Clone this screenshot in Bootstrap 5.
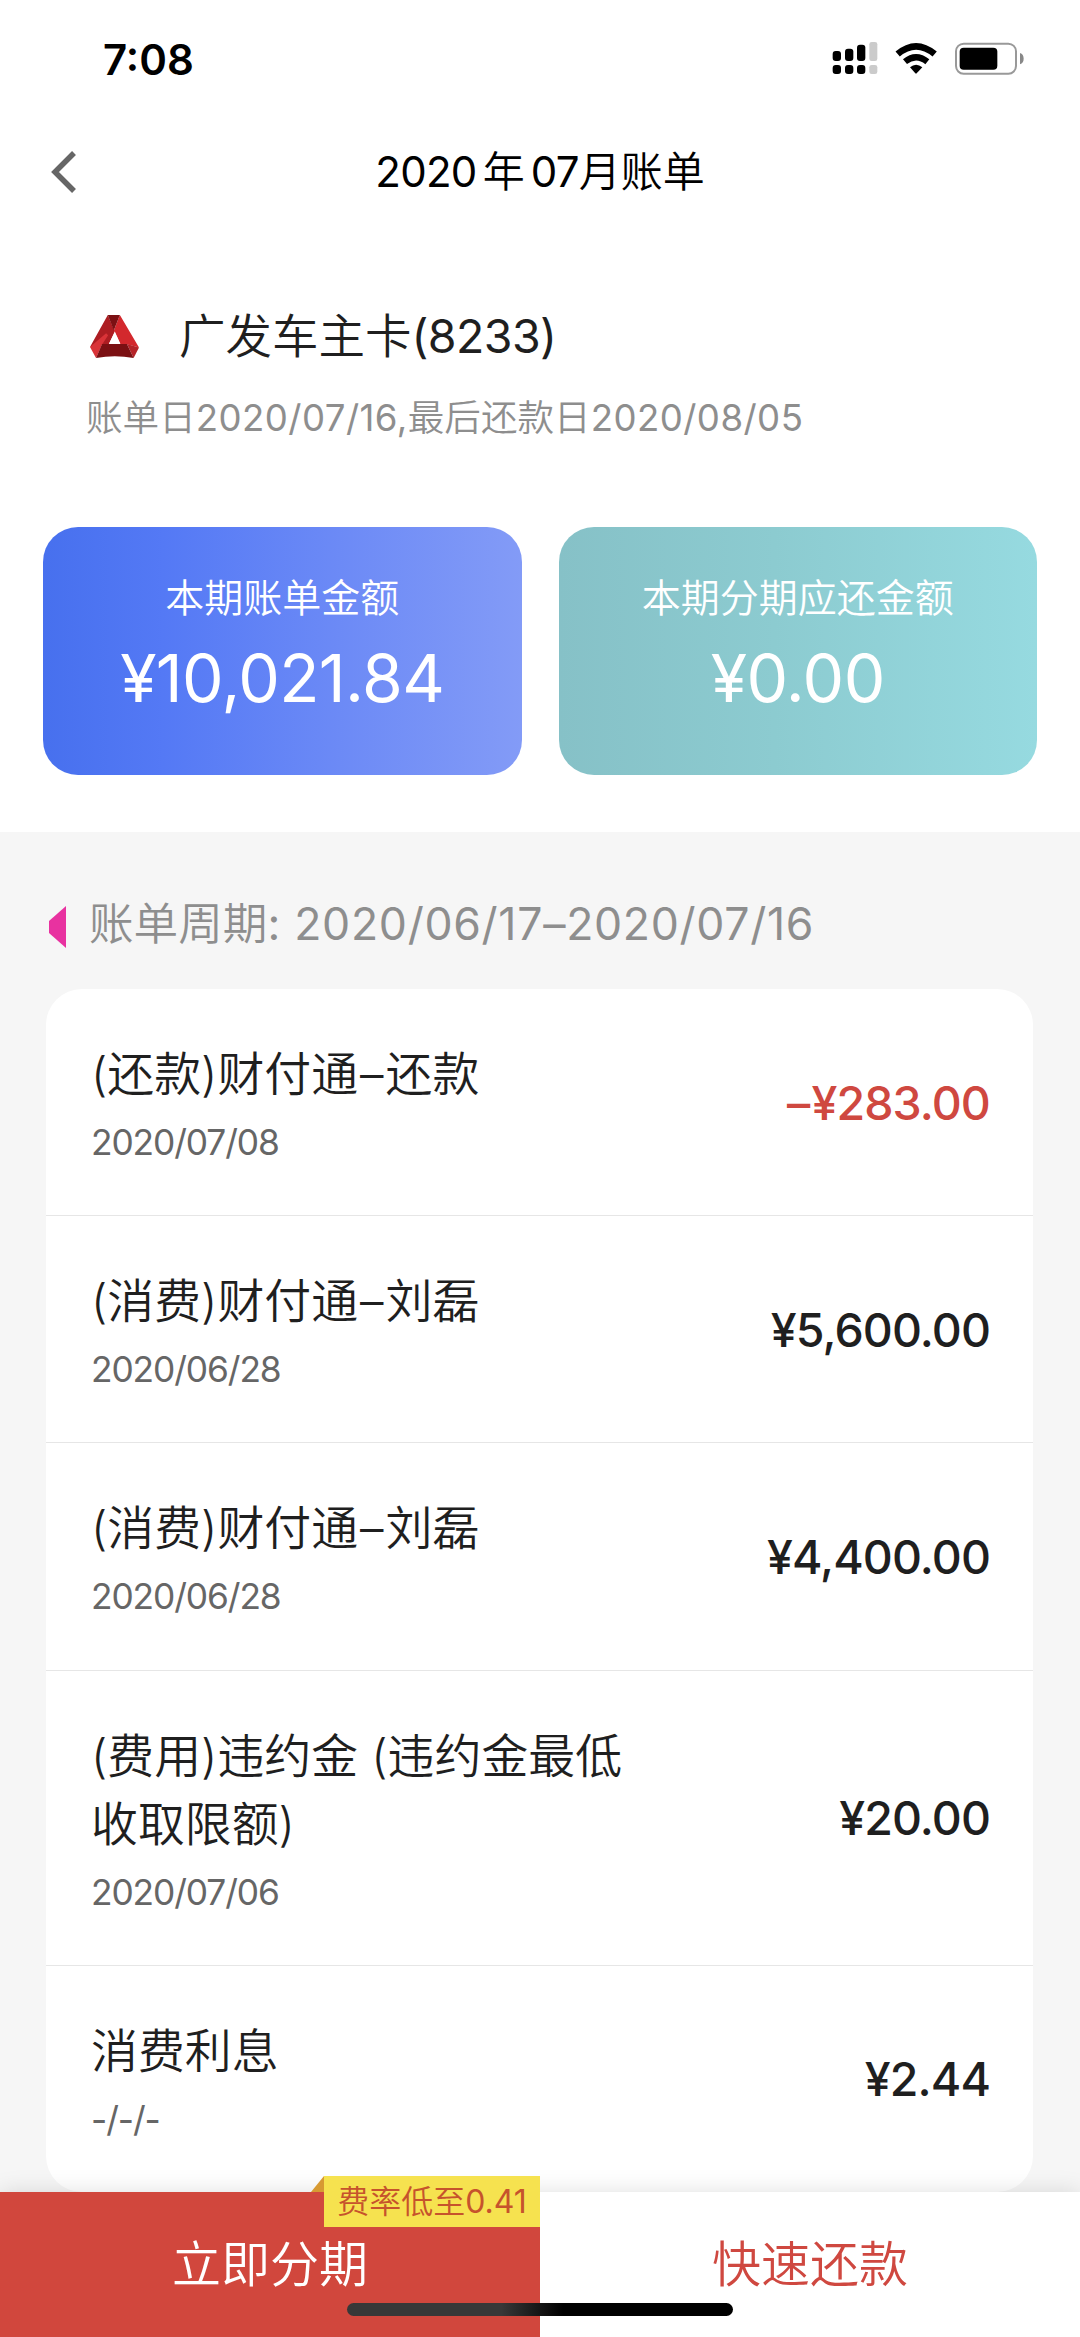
<!DOCTYPE html>
<html lang="zh-CN">
<head>
<meta charset="utf-8">
<meta name="viewport" content="width=device-width, initial-scale=1">
<title>2020年07月账单</title>
<link href="https://cdn.jsdelivr.net/npm/bootstrap@5.3.0/dist/css/bootstrap.min.css" rel="stylesheet">
<style>
  body { font-family: Inter, "Noto Sans CJK SC", sans-serif; font-weight: 350; color: #1f1f1f; background: #fff; width: 1080px; }
  .screen { height: 2337px; overflow: hidden; }
  .status-bar { height: 119px; padding-left: 103px; }
  .clock { font-size: 42px; font-weight: 600; line-height: 60px; color: #000; }
  .status-icons { margin-right: 40px; }
  .title-bar { height: 106px; }
  .back-link { left: 50px; top: 32px; line-height: 0; }
  .page-title { font-size: 42px; line-height: 60px; color: #000; font-weight: 350; }
  .page-title .gap-char { margin: 0 6px; }
  .page-title .digits { letter-spacing: -.7px; }
  .digits { font-weight: 400; }
  .account { height: 607px; padding: 77px 43px 0; background: #fff; }
  .account-name { padding-left: 47px; gap: 40px; font-size: 46.5px; line-height: 68px; }
  .account-name .digits { letter-spacing: -.6px; }
  .account-dates { padding-left: 43px; margin-top: 18px; font-size: 36.6px; line-height: 60px; color: #8e8e8e; }
  .account-dates .digits { letter-spacing: .45px; }
  .stat-row { gap: 37px; margin-top: 79px; }
  .stat { height: 248px; border-radius: 35px; color: #fff; padding-top: 41px; }
  .stat-blue { background: linear-gradient(90deg, #4770ee, #5479f5 25%, #6c8af6 62%, #839bf7); }
  .stat-teal { background: linear-gradient(90deg, #86c1c7, #8ccbd0 45%, #96dae0); }
  .stat-label { font-size: 39px; line-height: 60px; }
  .stat-value { font-size: 66px; line-height: 80px; margin-top: 10px; letter-spacing: -.6px; font-weight: 400; }
  .bill { background: #f6f6f6; padding: 62px 47px 0 46px; }
  .period { font-size: 44.6px; line-height: 60px; color: #8e8e8e; }
  .period svg { margin: 6px 23px 0 3px; }
  .period .digits { letter-spacing: .7px; }
  .entries { margin-top: 35px; border-radius: 36px; background: #fff; --bs-list-group-bg: #fff; }
  .entry { padding: 51px 43px 45.2px 45px; border: 0; border-bottom: 1px solid #e6e6e6; background: transparent; color: #1f1f1f; }
  .entry:last-child { border-color: transparent; }
  .entry-name { font-size: 46.9px; line-height: 68px; width: 550px; }
  .dash { padding: 0 2px; }
  .entry-date { font-size: 35.3px; line-height: 54px; margin-top: 8px; color: #666; letter-spacing: -1.1px; font-weight: 400; }
  .entry-sum { font-size: 46.5px; line-height: 60px; font-weight: 500; letter-spacing: -.9px; margin-bottom: 5px; }
  .refund { color: #cf4840; }
  .action-bar { height: 145px; box-shadow: 0 0 22px rgba(0,0,0,.13); background: #fff; }
  .action { font-size: 49px; line-height: 60px; padding-top: 43px; text-decoration: none; }
  .action-red { background: #d1473d; color: #fff; }
  .action-plain { color: #cf4840; background: #fff; }
  .rate-tag { right: 0; top: -16px; width: 216px; height: 51px; line-height: 51px; font-size: 32px; background: #f6e24f; color: #c6532c; }
  .rate-tag svg { left: -13px; top: 0; }
  .home-line { left: 347px; bottom: 21px; width: 386px; height: 13px; border-radius: 7px; background: linear-gradient(90deg, #383838 40%, #000 56%); }
</style>
</head>
<body>
<main class="screen d-flex flex-column">
  <header>
    <div class="status-bar d-flex align-items-center justify-content-between">
      <span class="clock">7:08</span>
      <svg class="status-icons" width="220" height="60" viewBox="0 0 660 180" aria-hidden="true">
        <g><rect x="38" y="63" width="25" height="30" rx="9"/><rect x="75" y="56" width="25" height="37" rx="9"/><rect x="111" y="44" width="25" height="49" rx="9"/>
        <rect x="38" y="105" width="25" height="27" rx="9"/><rect x="75" y="105" width="25" height="27" rx="9"/><rect x="111" y="105" width="25" height="27" rx="9"/></g>
        <g fill="#cbcbcb"><rect x="148" y="36" width="24" height="57" rx="7"/><rect x="148" y="105" width="24" height="27" rx="7"/></g>
        <g fill="none" stroke="#000" stroke-width="20"><path d="M233 72Q288 26 344 72"/><path d="M255 95Q288 68 322 95" stroke-width="19"/></g>
        <path d="M270 112Q288 96 307 112L290 130Q288 132 286 130Z"/>
        <rect x="408" y="41" width="180" height="90" rx="23" fill="none" stroke="#999" stroke-width="6"/>
        <rect x="419" y="53" width="113" height="66" rx="12"/>
        <path d="M600 69Q611 73 611 86T600 103Z" fill="#888"/>
      </svg>
    </div>
    <nav class="title-bar position-relative d-flex align-items-center justify-content-center">
      <a class="back-link position-absolute" href="#" aria-label="返回"><svg width="28" height="42" viewBox="0 0 28 42"><path d="M24 2L5 21L24 40" fill="none" stroke="#666" stroke-width="5.5"/></svg></a>
      <h1 class="page-title d-flex m-0"><span class="digits">2020</span><span class="gap-char">年</span><span class="digits">07</span><span>月账单</span></h1>
    </nav>
  </header>

  <section class="account flex-shrink-0">
    <div class="account-name d-flex align-items-center">
      <svg width="49" height="43" viewBox="32 30 146 128" aria-hidden="true">
        <path d="M85 30L106 80L88 117H68L32 125Z" fill="#ad1d22"/>
        <path d="M121 30L178 127L142 117H123L103 76Z" fill="#d3282d"/>
        <path d="M32 125L80 84L86 90L68 118L50 158Z" fill="#d93338"/>
        <path d="M142 116L178 127L162 158Z" fill="#b52328"/>
        <path d="M68 116H142L162 158Q106 148 50 158Z" fill="#7b1013"/>
        <path d="M85 30H121L103 76Z" fill="#7b1013"/>
        <path d="M106 79L122 115H89Z" fill="#fff"/>
      </svg>
      <span>广发车主卡<span class="digits">(8233)</span></span>
    </div>
    <div class="account-dates">账单日<span class="digits">2020/07/16,</span>最后还款日<span class="digits">2020/08/05</span></div>
    <div class="stat-row d-flex text-center">
      <div class="stat stat-blue flex-fill w-50"><div class="stat-label">本期账单金额</div><div class="stat-value">¥10,021.84</div></div>
      <div class="stat stat-teal flex-fill w-50"><div class="stat-label">本期分期应还金额</div><div class="stat-value">¥0.00</div></div>
    </div>
  </section>

  <section class="bill flex-grow-1">
    <div class="period d-flex align-items-center">
      <svg width="17" height="42" viewBox="0 0 17 42" aria-hidden="true"><path d="M17 0V42L0 27V15Z" fill="#e832a0"/></svg>
      <span>账单周期<span class="digits">: 2020/06/17–2020/07/16</span></span>
    </div>
    <ul class="entries list-group list-group-flush">
      <li class="entry list-group-item d-flex align-items-center justify-content-between"><div><div class="entry-name">(还款)财付通<span class="dash">–</span>还款</div><div class="entry-date">2020/07/08</div></div><div class="entry-sum refund"><span class="dash">–</span>¥283.00</div></li>
      <li class="entry list-group-item d-flex align-items-center justify-content-between"><div><div class="entry-name">(消费)财付通<span class="dash">–</span>刘磊</div><div class="entry-date">2020/06/28</div></div><div class="entry-sum">¥5,600.00</div></li>
      <li class="entry list-group-item d-flex align-items-center justify-content-between"><div><div class="entry-name">(消费)财付通<span class="dash">–</span>刘磊</div><div class="entry-date">2020/06/28</div></div><div class="entry-sum">¥4,400.00</div></li>
      <li class="entry list-group-item d-flex align-items-center justify-content-between"><div><div class="entry-name">(费用)违约金 (违约金最低收取限额)</div><div class="entry-date">2020/07/06</div></div><div class="entry-sum">¥20.00</div></li>
      <li class="entry list-group-item d-flex align-items-center justify-content-between"><div><div class="entry-name">消费利息</div><div class="entry-date">-/-/-</div></div><div class="entry-sum">¥2.44</div></li>
    </ul>
  </section>

  <footer class="action-bar position-relative d-flex flex-shrink-0 text-center">
    <a class="action action-red w-50 position-relative" href="#">立即分期
      <span class="rate-tag position-absolute"><svg class="position-absolute" width="13" height="16" viewBox="0 0 13 16" aria-hidden="true"><path d="M13 0V16H0Z" fill="#d79a32"/></svg>费率低至<span class="digits">0.41</span></span>
    </a>
    <a class="action action-plain w-50" href="#">快速还款</a>
    <div class="home-line position-absolute"></div>
  </footer>
</main>
<script src="https://cdn.jsdelivr.net/npm/bootstrap@5.3.0/dist/js/bootstrap.bundle.min.js"></script>
</body>
</html>
